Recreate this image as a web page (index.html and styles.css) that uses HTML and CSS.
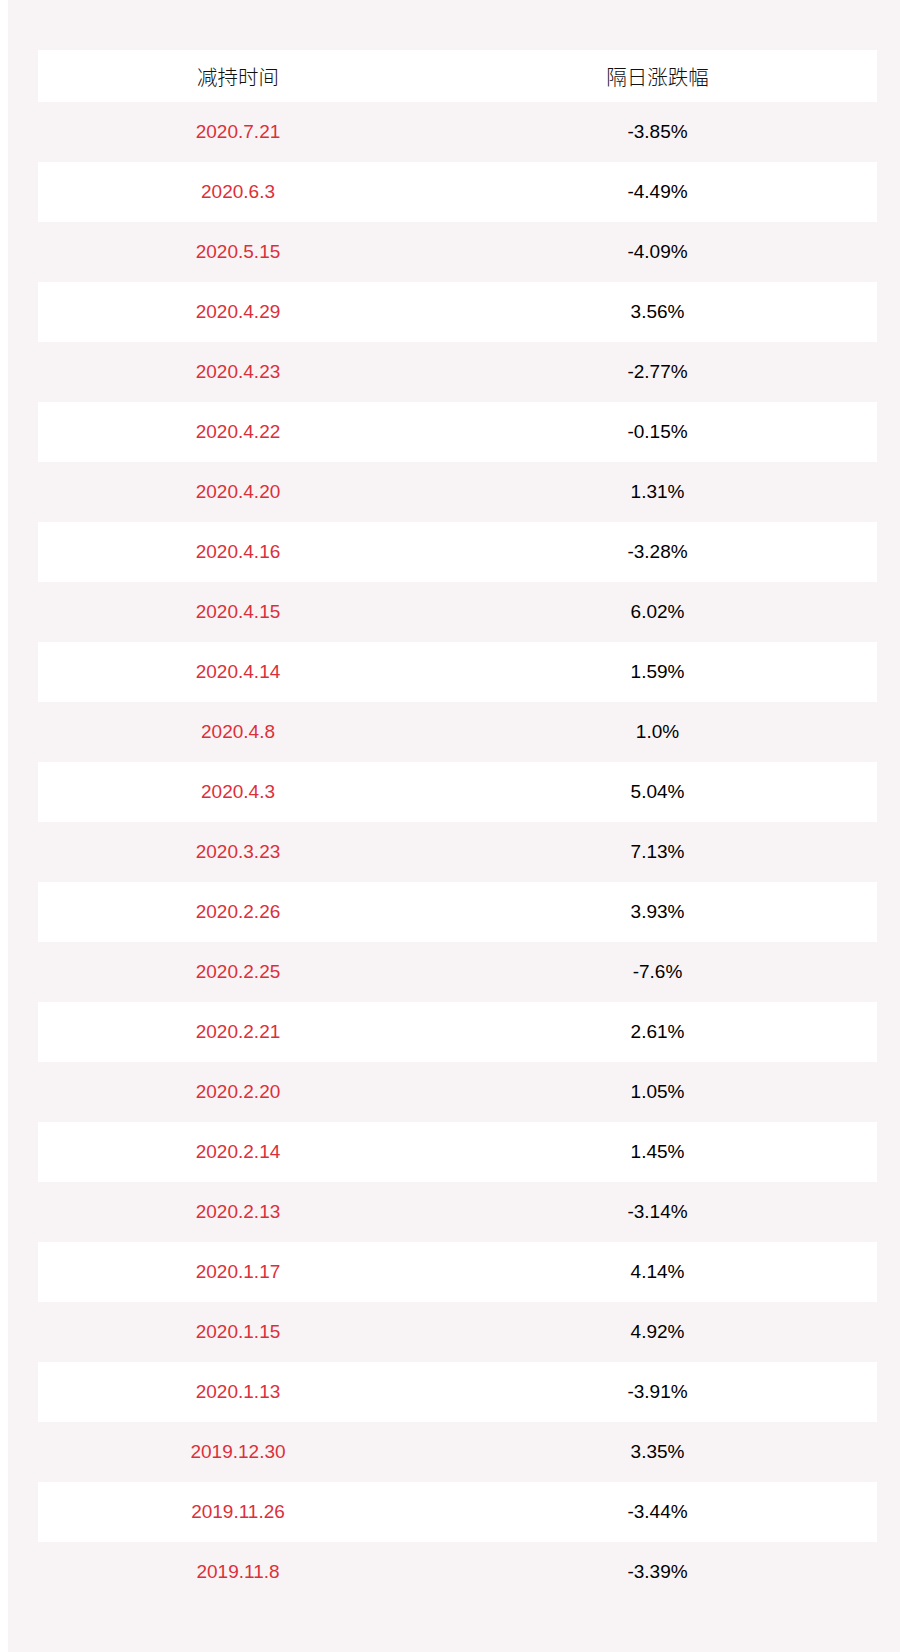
FILE: index.html
```html
<!DOCTYPE html>
<html lang="zh">
<head>
<meta charset="utf-8">
<link rel="stylesheet" href="styles.css">
</head>
<body>
<div class="wrap">
<table class="tbl">
<thead>
<tr><th class="c1">减持时间</th><th class="c2">隔日涨跌幅</th></tr>
</thead>
<tbody>
<tr><td class="date">2020.7.21</td><td>-3.85%</td></tr>
<tr><td class="date">2020.6.3</td><td>-4.49%</td></tr>
<tr><td class="date">2020.5.15</td><td>-4.09%</td></tr>
<tr><td class="date">2020.4.29</td><td>3.56%</td></tr>
<tr><td class="date">2020.4.23</td><td>-2.77%</td></tr>
<tr><td class="date">2020.4.22</td><td>-0.15%</td></tr>
<tr><td class="date">2020.4.20</td><td>1.31%</td></tr>
<tr><td class="date">2020.4.16</td><td>-3.28%</td></tr>
<tr><td class="date">2020.4.15</td><td>6.02%</td></tr>
<tr><td class="date">2020.4.14</td><td>1.59%</td></tr>
<tr><td class="date">2020.4.8</td><td>1.0%</td></tr>
<tr><td class="date">2020.4.3</td><td>5.04%</td></tr>
<tr><td class="date">2020.3.23</td><td>7.13%</td></tr>
<tr><td class="date">2020.2.26</td><td>3.93%</td></tr>
<tr><td class="date">2020.2.25</td><td>-7.6%</td></tr>
<tr><td class="date">2020.2.21</td><td>2.61%</td></tr>
<tr><td class="date">2020.2.20</td><td>1.05%</td></tr>
<tr><td class="date">2020.2.14</td><td>1.45%</td></tr>
<tr><td class="date">2020.2.13</td><td>-3.14%</td></tr>
<tr><td class="date">2020.1.17</td><td>4.14%</td></tr>
<tr><td class="date">2020.1.15</td><td>4.92%</td></tr>
<tr><td class="date">2020.1.13</td><td>-3.91%</td></tr>
<tr><td class="date">2019.12.30</td><td>3.35%</td></tr>
<tr><td class="date">2019.11.26</td><td>-3.44%</td></tr>
<tr><td class="date">2019.11.8</td><td>-3.39%</td></tr>
</tbody>
</table>
</div>
</body>
</html>
```

FILE: styles.css
```css
html, body {
  margin: 0;
  padding: 0;
  background: #ffffff;
}
body {
  padding-left: 8px;
  font-family: "Liberation Sans", "Noto Sans CJK SC", sans-serif;
}
.wrap {
  background: #f8f4f5;
  padding: 50px 23px 50px 30px;
}
.tbl {
  width: 839px;
  border-collapse: collapse;
  table-layout: fixed;
}
.tbl th {
  height: 52px;
  padding: 0;
  background: #ffffff;
  font-family: "Noto Sans CJK SC", sans-serif;
  font-weight: 300;
  font-size: 20.5px;
  color: #111111;
  text-align: center;
  vertical-align: middle;
}
.tbl .c1 { width: 400px; }
.tbl .c2 { width: 439px; }
.tbl td {
  height: 60px;
  padding: 0;
  font-size: 19px;
  color: #000000;
  text-align: center;
  vertical-align: middle;
}
.tbl tbody tr:nth-child(even) td {
  background: #ffffff;
}
.tbl td.date {
  color: #dd2f3a;
}
```
